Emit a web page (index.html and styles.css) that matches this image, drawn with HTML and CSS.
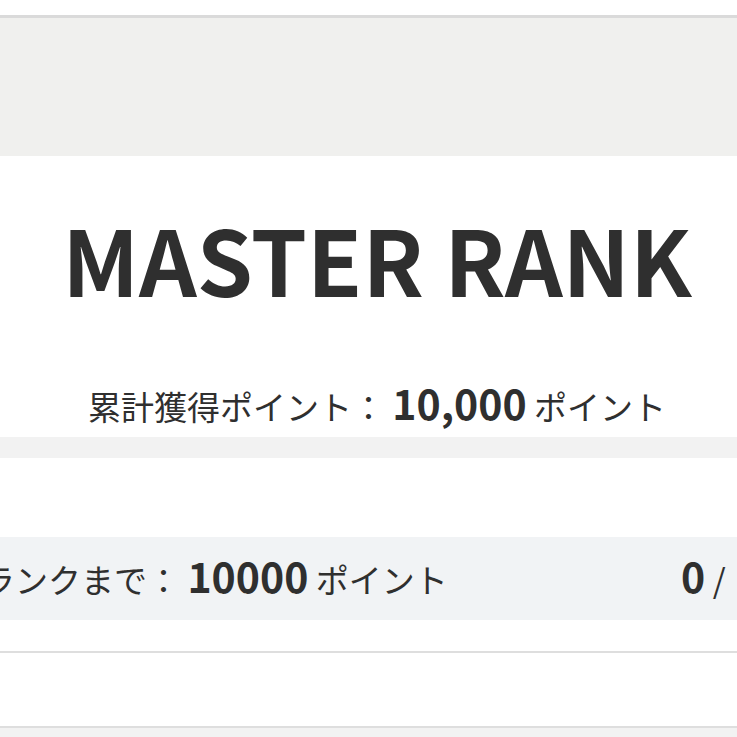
FILE: index.html
```html
<!DOCTYPE html>
<html lang="ja">
<head>
<meta charset="utf-8">
<title>MASTER RANK</title>
<link rel="stylesheet" href="styles.css">
</head>
<body>
<div class="page">
  <div class="top-space"></div>
  <div class="banner"></div>
  <section class="rank-card">
    <h1 class="rank-title">MASTER RANK</h1>
    <p class="total">累計獲得ポイント： <span class="num">10,000</span> ポイント</p>
  </section>
  <div class="band"></div>
  <section class="progress">
    <div class="progress-row">
      <div class="next">次のランクまで： <span class="num">10000</span> ポイント</div>
      <div class="ratio"><span class="num">0</span> / <span class="num">10000</span></div>
    </div>
  </section>
  <div class="list-item"></div>
  <div class="bottom"></div>
</div>
</body>
</html>
```

FILE: styles.css
```css
html, body {
  margin: 0;
  padding: 0;
  background: #ffffff;
  overflow: hidden;
}
body {
  font-family: "Noto Sans CJK JP", "Noto Sans", sans-serif;
  color: #2f2f2f;
}
.page {
  width: 966px;
  margin-left: -106px;
}
.top-space {
  height: 15px;
  background: #ffffff;
}
.banner {
  height: 138px;
  border-top: 3px solid #dadada;
  background: #f0f0ee;
}
.rank-card {
  background: #ffffff;
  padding: 57px 0 14px;
  text-align: center;
}
.rank-title {
  margin: 0;
  font-size: 90px;
  line-height: 1;
  font-weight: 700;
  color: #2f2f2f;
}
.total {
  margin: 79px 0 0;
  font-size: 33px;
  line-height: 1;
}
.num {
  font-size: 41px;
  font-weight: 700;
  line-height: 1;
}
.band {
  height: 21px;
  background: #f2f2f2;
}
.progress {
  background: #ffffff;
  padding: 79px 0 31px;
}
.progress-row {
  display: flex;
  justify-content: space-between;
  align-items: baseline;
  background: #f1f3f5;
  padding: 18px 0 24px 22px;
  font-size: 33px;
  line-height: 1;
}
.ratio .num + .num {
  margin-left: 6px;
}
.list-item {
  height: 73px;
  border-top: 2px solid #dedede;
  border-bottom: 2px solid #dedede;
  background: #ffffff;
}
.bottom {
  height: 40px;
  background: #f2f2f2;
}
```
